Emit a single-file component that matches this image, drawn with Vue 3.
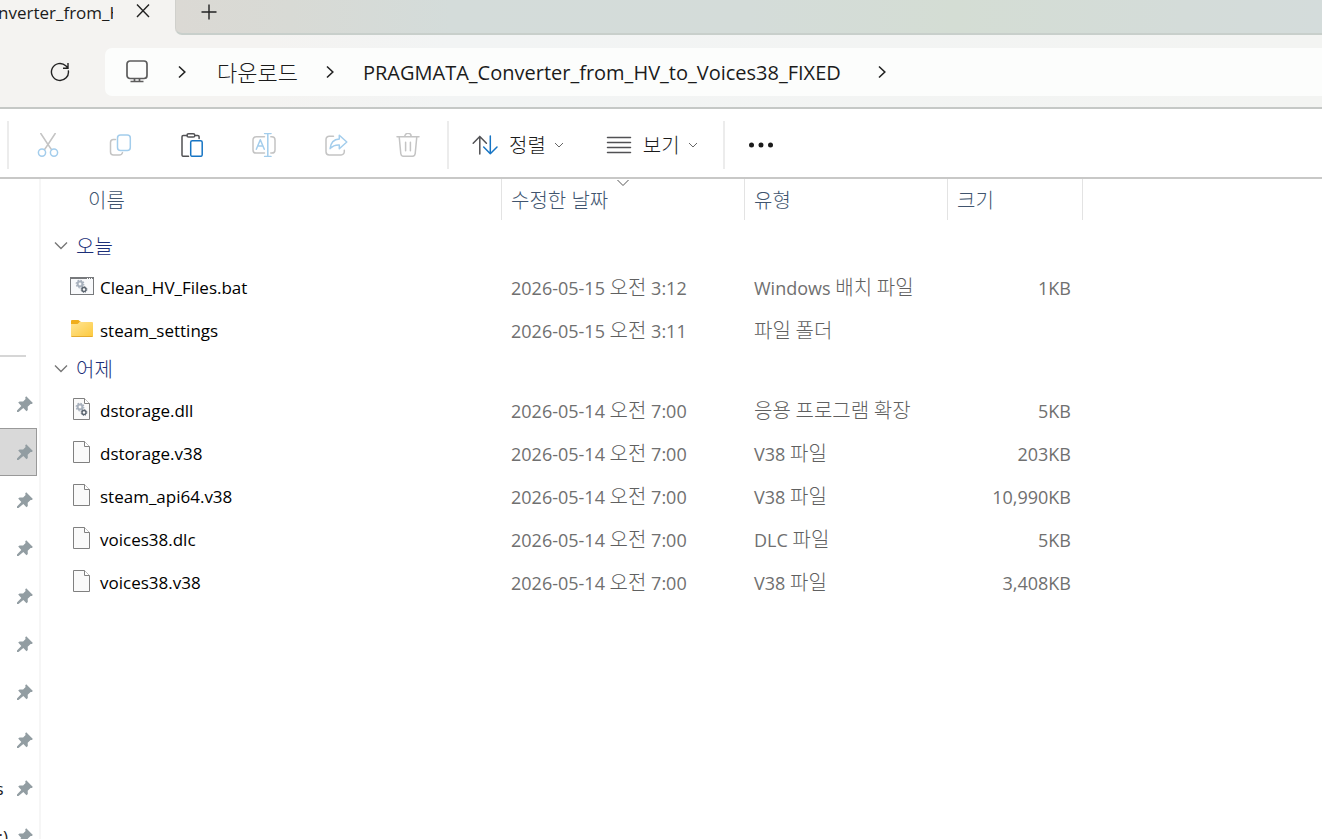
<template>
  <div class="explorer">
    <div class="tabs">
      <div class="tab">
        <span class="tab-title">nverter_from_H</span>
        <button class="icon-btn tab-close" aria-label="닫기">
          <svg width="16" height="16" viewBox="0 0 16 16"><path d="M2 1.5 14 14M14 1.5 2 14" /></svg>
        </button>
      </div>
      <div class="tab-strip">
        <button class="icon-btn" aria-label="새 탭">
          <svg width="16" height="16" viewBox="0 0 16 16"><path d="M8 .5v15M.5 8h15" /></svg>
        </button>
      </div>
    </div>

    <nav class="nav">
      <button class="icon-btn refresh" aria-label="새로 고침">
        <svg width="20" height="20" viewBox="0 0 20 20">
          <path d="M18.3 8.4A8.5 8.5 0 1 1 15.8 3.8L18 6M18 1v5.3h-5" />
        </svg>
      </button>
      <div class="address">
        <svg class="monitor" width="24" height="24" viewBox="0 0 24 24">
          <rect x="2" y="1" width="20" height="17.5" rx="3" />
          <path d="M9.5 18.5v3M14.5 18.5v3M5.5 21.5h13" />
        </svg>
        <svg class="sep" width="10" height="14" viewBox="0 0 10 14"><path d="M2 1.5 7.8 7 2 12.5" /></svg>
        <a class="crumb crumb-ko" href="#">다운로드</a>
        <svg class="sep" width="10" height="14" viewBox="0 0 10 14"><path d="M2 1.5 7.8 7 2 12.5" /></svg>
        <a class="crumb" href="#">PRAGMATA_Converter_from_HV_to_Voices38_FIXED</a>
        <svg class="sep" width="10" height="14" viewBox="0 0 10 14"><path d="M2 1.5 7.8 7 2 12.5" /></svg>
      </div>
    </nav>

    <div class="toolbar">
      <span class="divider"></span>
      <div class="tools">
        <button class="tool" aria-label="잘라내기">
          <svg class="off" width="24" height="24" viewBox="0 0 24 24">
            <path class="g" d="M4.8.5 12 11.5l3.6 5.2M19.2.5 12 11.5l-3.6 5.2" />
            <circle class="b" cx="6" cy="19.6" r="3.6" />
            <circle class="b" cx="18" cy="19.6" r="3.6" />
          </svg>
        </button>
        <button class="tool" aria-label="복사">
          <svg class="off" width="24" height="24" viewBox="0 0 24 24">
            <path class="g" d="M7.5 6.6H5.5a3 3 0 0 0-3 3V19a3 3 0 0 0 3 3h5.7q2.6 0 3.3-2.4" />
            <rect class="b" x="9.5" y="2" width="12.8" height="15.5" rx="3" />
          </svg>
        </button>
        <button class="tool" aria-label="붙여넣기">
          <svg class="on" width="24" height="24" viewBox="0 0 24 24">
            <path class="g" d="M7 2.5H3.3q-1.3 0-1.3 1.3v18.2q0 1.3 1.3 1.3H8.5M14.8 2.5h3q1.3 0 1.3 1.3v1.7" />
            <rect class="g" x="7" y=".8" width="7.8" height="3.2" rx="1.6" />
            <rect class="b" x="10.7" y="7.7" width="11.5" height="15.6" rx="1.6" />
          </svg>
        </button>
        <button class="tool" aria-label="이름 바꾸기">
          <svg class="off" width="24" height="24" viewBox="0 0 24 24">
            <path class="g" d="M12.5 3.7H4.2A3.2 3.2 0 0 0 1 6.9v10a3.2 3.2 0 0 0 3.2 3.2h8.3M18.8 3.7h1a3.2 3.2 0 0 1 3.2 3.2v10a3.2 3.2 0 0 1-3.2 3.2h-1" />
            <path class="b" d="M4.3 16.2 8.3 6.8l4 9.4M5.7 13h5.2M15.8.6v22.8M12.6.6H19M12.6 23.4H19" />
          </svg>
        </button>
        <button class="tool" aria-label="공유">
          <svg class="off" width="24" height="24" viewBox="0 0 24 24">
            <path class="g" d="M9.5 3.2H5.2A3.2 3.2 0 0 0 2 6.4v12.4A3.2 3.2 0 0 0 5.2 22h11.9a3.2 3.2 0 0 0 3.2-3.2v-1.5" />
            <path class="b" d="M15.3 2.2 22.8 9l-7.5 6.8V12q-5.6-.3-9.2 3.6Q7 6.5 15.3 6z" />
          </svg>
        </button>
        <button class="tool" aria-label="삭제">
          <svg class="off" width="24" height="24" viewBox="0 0 24 24">
            <path class="g" d="M1 3.7h22M8.8 3.5a3.2 3.2 0 0 1 6.4 0M3.2 3.7l1.6 17q.3 2.6 2.7 2.6h9q2.4 0 2.7-2.6l1.6-17M9.6 9.3v8.5M14.4 9.3v8.5" />
          </svg>
        </button>
      </div>
      <span class="divider"></span>
      <button class="menu">
        <svg class="on" width="26" height="24" viewBox="0 0 26 24">
          <path class="g" d="M7.8 21V3.5M1.2 10.3l6.6-6.8 6.6 6.8" />
          <path class="b" d="M18.3 3v17.7M11.7 14l6.6 6.7L25 14" />
        </svg>
        <span class="menu-label">정렬</span>
        <svg class="caret" width="10" height="6" viewBox="0 0 10 6"><path d="m1 1 4 4 4-4" /></svg>
      </button>
      <button class="menu menu-view">
        <svg class="on" width="26" height="24" viewBox="0 0 26 24">
          <path class="g" d="M1.5 4.5h23M1.5 9.5h23M1.5 14.5h23M1.5 19.5h23" />
        </svg>
        <span class="menu-label">보기</span>
        <svg class="caret" width="10" height="6" viewBox="0 0 10 6"><path d="m1 1 4 4 4-4" /></svg>
      </button>
      <span class="divider"></span>
      <button class="more" aria-label="자세히 보기">
        <svg width="26" height="6" viewBox="0 0 26 6">
          <circle cx="3.5" cy="3" r="2.5" /><circle cx="13" cy="3" r="2.5" /><circle cx="22.5" cy="3" r="2.5" />
        </svg>
      </button>
    </div>

    <div class="body">
      <aside class="side">
        <hr class="side-line">
        <button
          v-for="(pin, i) in pins"
          :key="i"
          class="pin"
          :class="{ selected: pin.selected }"
          aria-label="고정됨"
        >
          <span class="pin-label">{{ pin.label }}</span>
          <svg width="16" height="16" viewBox="0 0 16 16">
            <path d="M9.2.3 15.9 7l-1.1 1-1.2-.1-2.9 2.8.1 3.2-1.3 1.3-3.2-3.3L1.5 16H0v-1.5l4.3-4.6-3.1-3.3 1.4-1.2 3.5.1 2.5-2.5-.4-1.5z" />
          </svg>
        </button>
      </aside>

      <main class="files">
        <table>
          <thead>
            <tr>
              <th class="col-name">이름</th>
              <th class="col-date">
                수정한 날짜
                <svg class="sort-mark" width="14" height="8" viewBox="0 0 14 8"><path d="m1.5 1 5.5 5.5L12.5 1" /></svg>
              </th>
              <th class="col-type">유형</th>
              <th class="col-size">크기</th>
            </tr>
          </thead>
          <tbody v-for="group in groups" :key="group.name">
            <tr class="group">
              <td colspan="4">
                <button class="group-btn">
                  <svg width="14" height="9" viewBox="0 0 14 9"><path d="m1 1.5 6 6 6-6" /></svg>
                  <span>{{ group.name }}</span>
                </button>
              </td>
            </tr>
            <tr v-for="file in group.files" :key="file.name">
              <td>
                <div class="file">
                  <svg v-if="file.icon === 'bat'" class="file-icon" width="24" height="24" viewBox="0 0 24 24">
                    <rect x=".5" y="3.5" width="23" height="17" fill="#f8f9fb" stroke="#77797c" />
                    <path d="M0 4h24" stroke="#77797c" stroke-width="2" />
                    <path d="M17 4.5h1M19 4.5h1M21 4.5h1" stroke="#fff" />
                    <circle cx="10" cy="10" r="2.4" fill="none" stroke="#a7b0bc" stroke-width="2" />
                    <circle cx="10" cy="10" r="3.8" fill="none" stroke="#a7b0bc" stroke-width="1.2" stroke-dasharray="1.5 1.48" />
                    <circle cx="14" cy="15.5" r="2" fill="none" stroke="#59636e" stroke-width="1.4" />
                    <circle cx="14" cy="15.5" r="2.9" fill="none" stroke="#59636e" stroke-dasharray="1.14 1.14" />
                  </svg>
                  <svg v-else-if="file.icon === 'folder'" class="file-icon" width="24" height="24" viewBox="0 0 24 24">
                    <defs>
                      <linearGradient id="folder" x1="0" y1="0" x2="1" y2="1">
                        <stop offset="0" stop-color="#ffe596" />
                        <stop offset="1" stop-color="#fdc93c" />
                      </linearGradient>
                    </defs>
                    <path d="M1 4q0-1 1-1h6q1 0 1.5 1L11 5h-1L8 8H1z" fill="#f0ae1c" />
                    <path d="M1 7h6.5L10 5h12q1 0 1 1v13q0 1-1 1H2q-1 0-1-1z" fill="url(#folder)" />
                    <path d="M1.5 19.5h21" stroke="#e5ab2e" />
                  </svg>
                  <svg v-else class="file-icon" width="24" height="24" viewBox="0 0 24 24">
                    <path d="M3.5 1.5h11l5 5v16h-16z" fill="#fafafa" stroke="#808080" />
                    <path d="M14.5 1.5v5h5" fill="#fff" stroke="#808080" />
                    <template v-if="file.icon === 'dll'">
                      <circle cx="10" cy="10" r="2.4" fill="none" stroke="#a7b0bc" stroke-width="2" />
                      <circle cx="10" cy="10" r="3.8" fill="none" stroke="#a7b0bc" stroke-width="1.2" stroke-dasharray="1.5 1.48" />
                      <circle cx="14" cy="15.5" r="2" fill="none" stroke="#59636e" stroke-width="1.4" />
                      <circle cx="14" cy="15.5" r="2.9" fill="none" stroke="#59636e" stroke-dasharray="1.14 1.14" />
                    </template>
                  </svg>
                  <span class="file-name">{{ file.name }}</span>
                </div>
              </td>
              <td class="meta">{{ file.day }} <span class="ko">오전</span> {{ file.time }}</td>
              <td class="meta"><span v-for="(part, i) in splitHangul(file.type)" :key="i" :class="{ ko: i % 2 }">{{ part }}</span></td>
              <td class="meta size">{{ file.size }}</td>
            </tr>
          </tbody>
        </table>
      </main>
    </div>
  </div>
</template>

<script setup>
const pins = [
  { label: '' },
  { label: '', selected: true },
  { label: '' },
  { label: '' },
  { label: '' },
  { label: '' },
  { label: '' },
  { label: '' },
  { label: 's ' },
  { label: ':)' },
]

const groups = [
  {
    name: '오늘',
    files: [
      { name: 'Clean_HV_Files.bat', icon: 'bat', day: '2026-05-15', time: '3:12', type: 'Windows 배치 파일', size: '1KB' },
      { name: 'steam_settings', icon: 'folder', day: '2026-05-15', time: '3:11', type: '파일 폴더', size: '' },
    ],
  },
  {
    name: '어제',
    files: [
      { name: 'dstorage.dll', icon: 'dll', day: '2026-05-14', time: '7:00', type: '응용 프로그램 확장', size: '5KB' },
      { name: 'dstorage.v38', icon: 'file', day: '2026-05-14', time: '7:00', type: 'V38 파일', size: '203KB' },
      { name: 'steam_api64.v38', icon: 'file', day: '2026-05-14', time: '7:00', type: 'V38 파일', size: '10,990KB' },
      { name: 'voices38.dlc', icon: 'file', day: '2026-05-14', time: '7:00', type: 'DLC 파일', size: '5KB' },
      { name: 'voices38.v38', icon: 'file', day: '2026-05-14', time: '7:00', type: 'V38 파일', size: '3,408KB' },
    ],
  },
]

// odd parts are the hangul runs, set a little larger than the latin text
function splitHangul(text) {
  return text.split(/([가-힣]+)/)
}
</script>

<style>
body { margin: 0; background: #fff; }
</style>

<style scoped>
.explorer { height: 100vh; display: flex; flex-direction: column; overflow: hidden; background: #fff; color: #1b1b1b; font-family: 'Open Sans', 'Noto Sans CJK KR', sans-serif; font-size: 18px; }

button { padding: 0; border: 0; background: none; color: inherit; font: inherit; }
svg    { display: block; flex: none; fill: none; }

/* tabs */
.tabs      { display: flex; height: 35px; flex: none; background: #f4f3f1; }
.tab       { display: flex; width: 175px; flex: none; }
.tab-title { width: 113px; overflow: hidden; white-space: nowrap; font-size: 17px; line-height: 25px; text-indent: -2px; }
.tab-close { height: 16px; margin: 3px 0 0 22px; }
.tab-strip { flex: 1; display: flex; align-items: flex-start; padding: 4px 25px; box-sizing: border-box; border-bottom: 2px solid #c8cfcb; border-left: 1px solid #d0d0cc; border-bottom-left-radius: 7px; background: linear-gradient(90deg, #dbd9d4 0, #d8dad5 10%, #d4dcda 24%, #d4dcd9 50%, #d4ddd4 68%, #d4dcd9 88%, #d4dcdb 100%); }
.icon-btn svg { stroke: #222; stroke-width: 1.4; }

/* address bar */
.nav      { display: flex; align-items: center; height: 70px; flex: none; padding-top: 2px; border-bottom: 2px solid #c5c8c6; background: linear-gradient(90deg, #f4f3f1 20%, #f2f4f4 34%, #f3f4f2); }
.refresh  { margin: 0 35px 0 50px; }
.address  { flex: 1; display: flex; align-items: center; height: 48px; border-radius: 7px 0 0 7px; background: #fcfdfc; }
.monitor  { margin: 0 28px 0 20px; stroke: #5c5c5c; stroke-width: 1.7; }
.sep      { stroke: #222; stroke-width: 1.6; }
.crumb    { margin: 0 36px 0 28px; padding-top: 2px; color: #1b1b1b; font-size: 20px; line-height: 28px; text-decoration: none; white-space: nowrap; }
.crumb-ko { margin: 0 27px 0 30px; padding: 0; font-size: 22px; font-weight: 300; }

/* toolbar */
.toolbar    { display: flex; align-items: center; height: 64px; flex: none; padding: 4px 0 0 7px; border-bottom: 2px solid #c8c8c7; }
.divider    { width: 2px; height: 48px; flex: none; background: #ececec; }
.tools      { display: flex; padding: 0 3px; }
.tool       { width: 72px; height: 48px; display: flex; align-items: center; justify-content: center; }
.off, .on   { stroke-width: 1.5; stroke-linecap: round; stroke-linejoin: round; }
.off .g     { stroke: #c4c4c4; }
.off .b     { stroke: #a3cdec; }
.on .g      { stroke: #515154; }
.on .b      { stroke: #1775c4; }
.menu       { display: flex; align-items: center; padding: 0 21px 0 23px; }
.menu-view  { padding: 0 25px 0 21px; }
.menu-label { margin: 0 8px 0 11px; padding-top: 2px; font-size: 20px; line-height: 28px; font-weight: 300; }
.caret      { stroke: #666; }
.more       { margin-left: 23px; }
.more svg   { fill: #1b1b1b; }

/* pinned folders */
.body      { display: flex; flex: 1; min-height: 0; }
.side      { width: 39px; flex: none; overflow: hidden; border-right: 2px solid #f6f6f6; }
.side-line { width: 26px; height: 2px; margin: 176px 0 23px; border: 0; background: #d6d6d6; }
.pin       { display: flex; align-items: center; justify-content: space-between; width: 37px; height: 48px; padding-right: 4px; box-sizing: border-box; }
.pin svg   { fill: #929da2; }
.pin-label { display: flex; justify-content: flex-end; width: 8px; font-size: 17px; white-space: pre; }
.selected  { border: 1px solid #999; border-left: 0; background: #d9d9d9; padding-right: 3px; }

/* file list */
.files   { flex: 1; overflow: hidden; }
table    { width: 1042px; table-layout: fixed; border-spacing: 0; }
th       { position: relative; height: 41px; padding: 3px 0 0 9px; box-sizing: border-box; border-right: 1px solid #e3e3e3; color: #40546e; font-size: 20px; line-height: 28px; font-weight: 300; text-align: left; }
td       { height: 43px; padding: 0 0 2px; box-sizing: border-box; }
thead::after { content: ''; display: block; height: 10px; }
.col-name  { width: 461px; padding-left: 47px; }
.col-date  { width: 243px; }
.col-type  { width: 203px; }
.col-size  { width: 135px; }
.sort-mark { position: absolute; top: 0; left: 50%; margin-left: -7px; stroke: #555; }

.group td        { height: 37px; padding: 0; vertical-align: top; }
.group-btn       { display: flex; align-items: center; gap: 8px; height: 30px; padding-left: 13px; color: #1c2f78; font-size: 20px; font-weight: 300; line-height: 26px; }
.group-btn svg   { stroke: #777; stroke-width: 1.4; }
.group-btn span  { padding-top: 4px; }

.file      { display: flex; align-items: center; padding-left: 29px; gap: 6px; }
.file-icon { margin-bottom: 4px; }
.file-name { color: #000; font-size: 17px; line-height: 28px; }
.meta      { padding-left: 9px; color: #707070; line-height: 28px; white-space: pre-wrap; }
.ko        { color: #606060; font-size: 20px; font-weight: 300; line-height: 20px; }
.size      { padding-right: 12px; text-align: right; }
</style>
